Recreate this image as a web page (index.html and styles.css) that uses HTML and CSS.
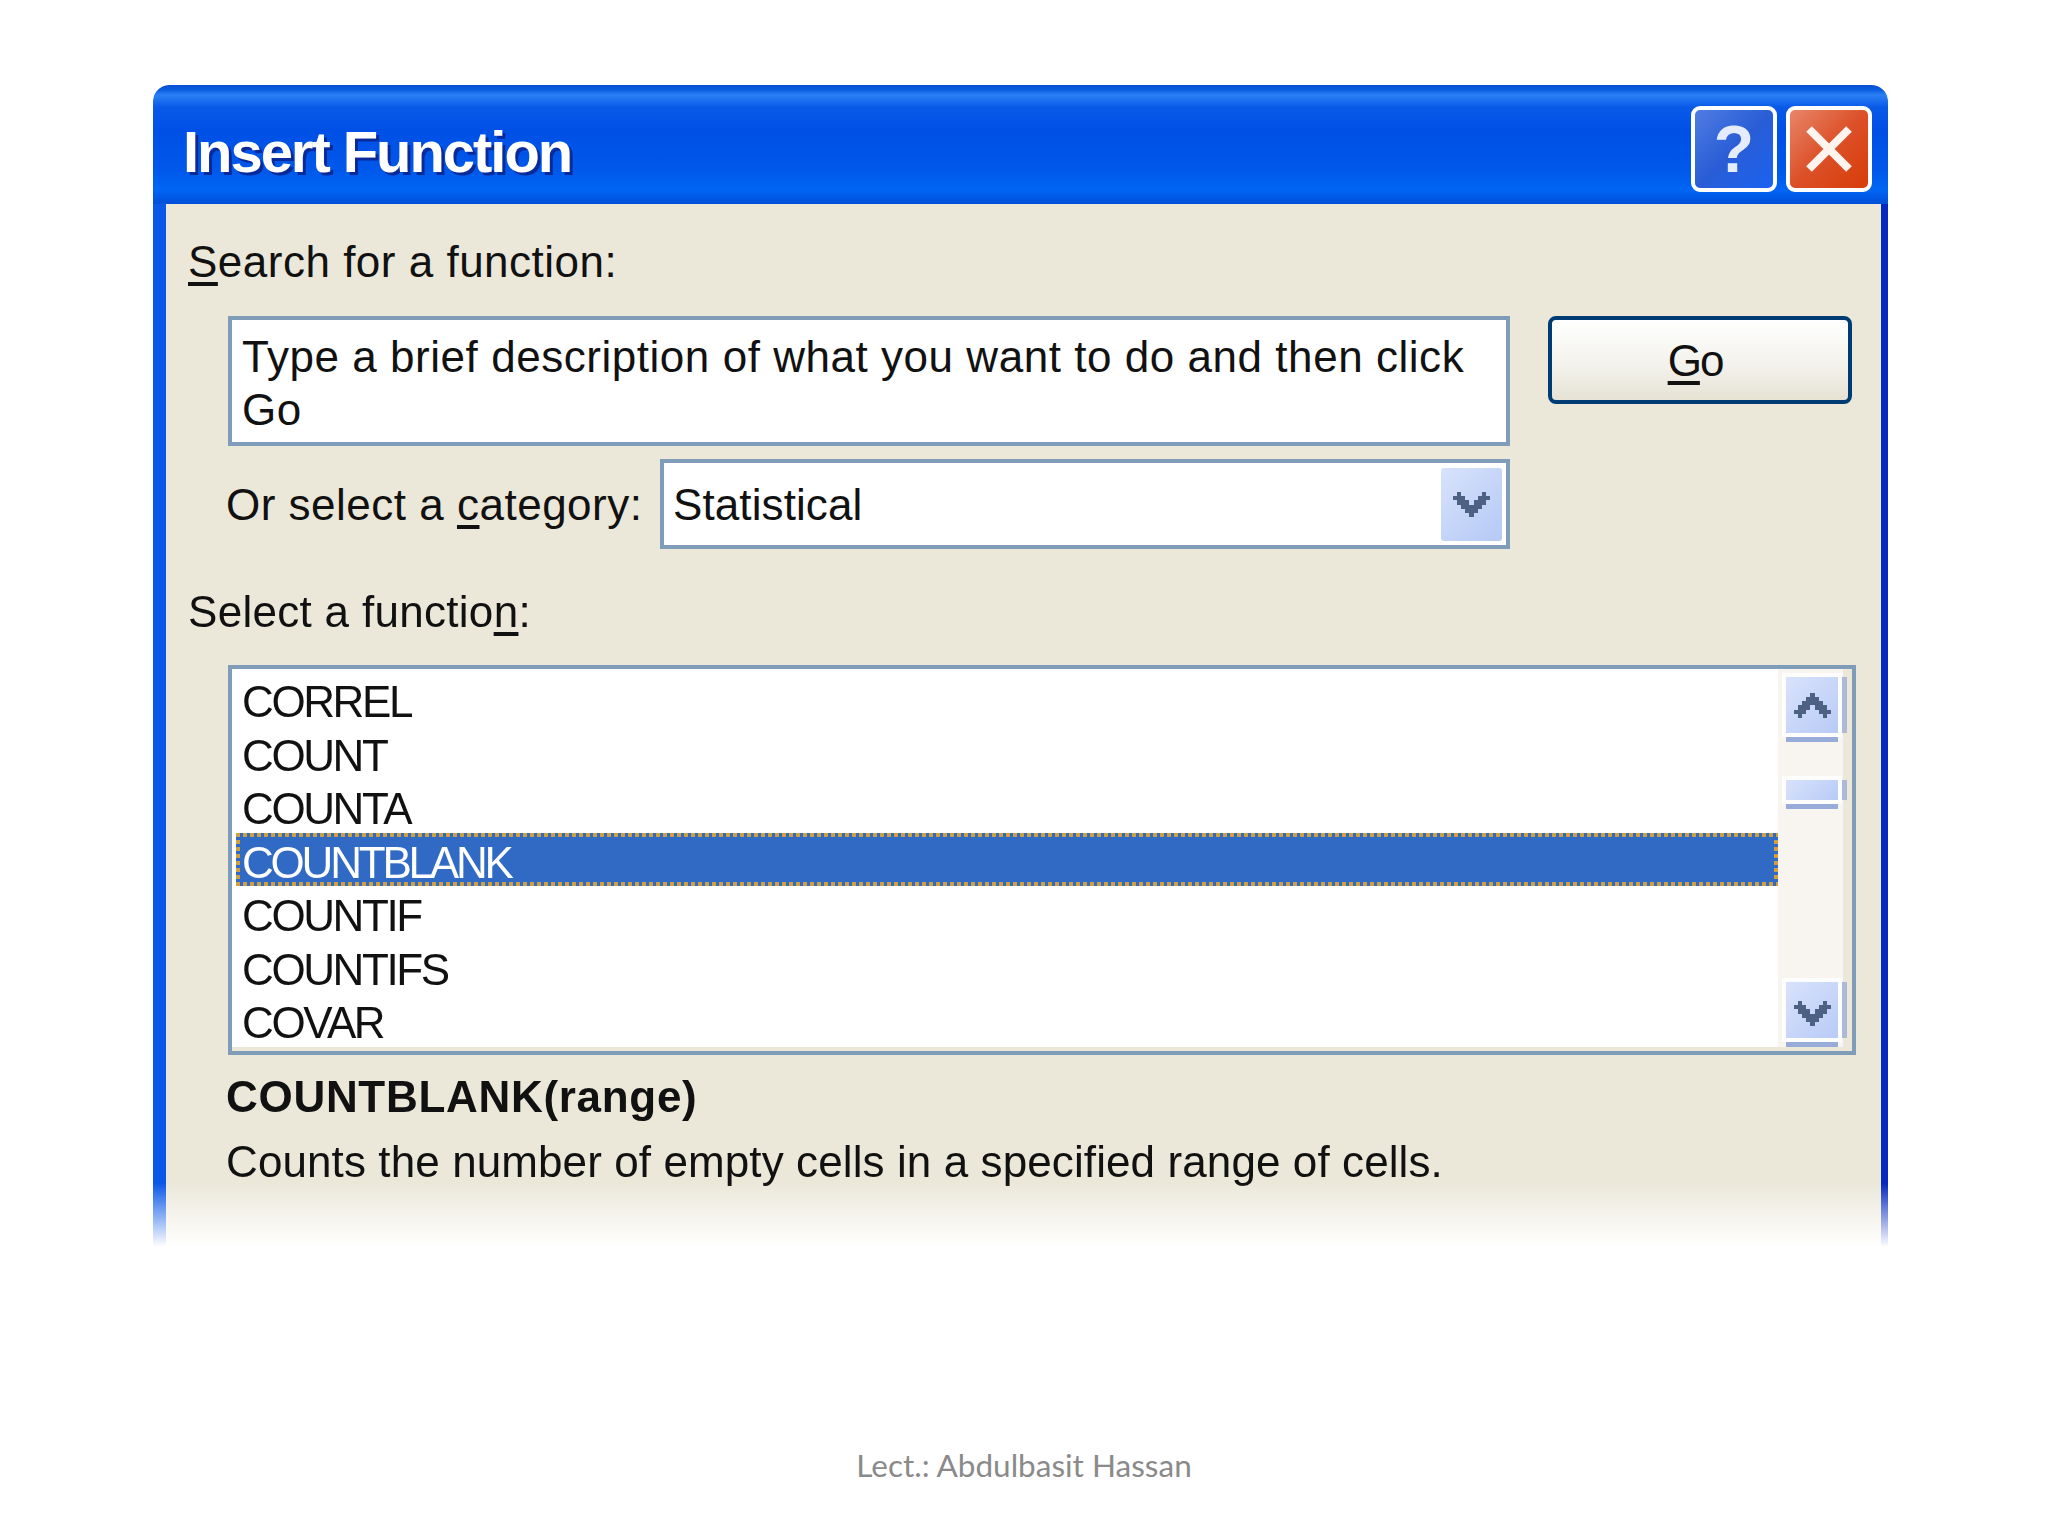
FILE: index.html
```html
<!DOCTYPE html>
<html lang="en">

<head>
    <meta charset="UTF-8">
    <meta name="viewport" content="width=device-width, initial-scale=1.0">
    <title>Insert Function</title>
    <link rel="stylesheet" href="styles.css">
</head>

<body>

    <svg class="defs" width="0" height="0">
        <symbol id="chevron" viewBox="0 0 9 6">
            <path d="M1 0H2V1H3V2H4V3H5V2H6V1H7V0H8V1H9V2H8V3H7V4H6V5H5V6H4V5H3V4H2V3H1V2H0V1H1Z"></path>
        </symbol>
    </svg>

    <div class="window">
        <div class="titlebar">
            <h1>Insert Function</h1>
            <div class="title-buttons">
                <div class="title-btn help-btn">?</div>
                <div class="title-btn close-btn">
                    <svg width="46" height="46" viewBox="0 0 46 46">
                        <path d="M3 3L43 43M43 3L3 43"></path>
                    </svg>
                </div>
            </div>
        </div>

        <div class="client">
            <p class="label"><u>S</u>earch for a function:</p>

            <div class="search-grid">
                <div class="search-input">Type a brief description of what you want to do and then click Go</div>
                <button class="go-btn"><u>G</u>o</button>
                <div class="category-row">
                    <span class="category-label">Or select a <u>c</u>ategory:</span>
                    <div class="combo">
                        <span>Statistical</span>
                        <div class="combo-btn">
                            <svg class="chevron"><use href="#chevron"></use></svg>
                        </div>
                    </div>
                </div>
            </div>

            <p class="label select-label">Select a functio<u>n</u>:</p>

            <div class="func-list">
                <ul>
                    <li>CORREL</li>
                    <li>COUNT</li>
                    <li>COUNTA</li>
                    <li class="selected">COUNTBLANK</li>
                    <li>COUNTIF</li>
                    <li>COUNTIFS</li>
                    <li>COVAR</li>
                </ul>
                <div class="scrollbar">
                    <div class="scroll-btn">
                        <svg class="chevron chevron-up"><use href="#chevron"></use></svg>
                    </div>
                    <div class="scroll-thumb"></div>
                    <div class="scroll-btn scroll-down">
                        <svg class="chevron"><use href="#chevron"></use></svg>
                    </div>
                </div>
            </div>

            <div class="func-info">
                <p class="func-sig">COUNTBLANK(range)</p>
                <p class="func-desc">Counts the number of empty cells in a specified range of cells.</p>
            </div>
        </div>
    </div>

    <p class="footer">Lect.: Abdulbasit Hassan</p>

</body>

</html>
```

FILE: styles.css
```css
body {
    font-family: 'Liberation Sans', Arial, sans-serif;
    font-size: 44px;
    line-height: 53px;
    letter-spacing: 0.1px;
    color: #111;
    background-color: white;
    margin: 0;
    height: 1536px;
    overflow: hidden;
}

.defs {
    display: block;
}

p {
    margin: 0;
}

u {
    text-underline-offset: 5px;
    text-decoration-thickness: 4px;
}

.window {
    width: 1735px;
    height: 1162px;
    margin: 85px 0 0 153px;
    border-radius: 16px 16px 0 0;
    overflow: hidden;
    display: flex;
    flex-direction: column;
    -webkit-mask-image: linear-gradient(to bottom, black 1098px, transparent 1162px);
    mask-image: linear-gradient(to bottom, black 1098px, transparent 1162px);
}

.titlebar {
    height: 119px;
    flex-shrink: 0;
    display: flex;
    justify-content: space-between;
    padding: 0 16px 0 30px;
    background: linear-gradient(to bottom,
            #0a4ed0 0,
            #0a5ee0 5px,
            #2c80f5 10px,
            #0a5ae8 22px,
            #0050e6 45px,
            #0058ea 85px,
            #0066f5 105px,
            #0050d8 118px);
}

h1 {
    margin: 0;
    padding-top: 32px;
    color: white;
    font-size: 58px;
    line-height: 70px;
    font-weight: bold;
    letter-spacing: -2.05px;
    text-shadow: 3px 3px 0 #0a2a9a;
}

.title-buttons {
    display: flex;
    gap: 9px;
    padding-top: 21px;
}

.title-btn {
    width: 86px;
    height: 86px;
    box-sizing: border-box;
    border: 4px solid white;
    border-radius: 9px;
    display: flex;
    justify-content: center;
    align-items: center;
}

.help-btn {
    color: #e6ecff;
    font-size: 66px;
    font-weight: bold;
    background: linear-gradient(135deg, #4f7de2, #2a5dd6 50%, #1a62f0);
}

.close-btn {
    background: linear-gradient(135deg, #e8866a, #dc5028 50%, #d83c08);
}

.close-btn path {
    stroke: #fff4ee;
    stroke-width: 8;
    fill: none;
}

.client {
    flex: 1;
    background-color: #ebe8da;
    border-left: 13px solid #0a58e8;
    border-right: 7px solid #0428c0;
    padding: 31px 25px 0 22px;
}

.label {
    letter-spacing: 0.5px;
}

.search-grid {
    display: grid;
    grid-template-columns: 1282px 304px;
    column-gap: 38px;
    row-gap: 13px;
    align-items: start;
    margin: 28px 0 0 40px;
}

.search-input {
    height: 130px;
    box-sizing: border-box;
    border: 4px solid #7f9db9;
    background-color: white;
    padding: 10px 10px 0;
    letter-spacing: 0.54px;
}

.go-btn {
    height: 88px;
    box-sizing: border-box;
    border: 4px solid #003c74;
    border-radius: 8px;
    background: linear-gradient(to bottom, #ffffff, #f2f1ea 60%, #e6e2d4);
    font: inherit;
    letter-spacing: -2px;
    color: inherit;
    padding: 0 10px 0 0;
}

.category-row {
    grid-column: 1;
    display: flex;
    justify-content: space-between;
    align-items: center;
    margin-left: -2px;
}

.category-label {
    letter-spacing: 0.5px;
}

.combo {
    width: 850px;
    height: 90px;
    box-sizing: border-box;
    border: 4px solid #7f9db9;
    background-color: white;
    display: flex;
    justify-content: space-between;
    align-items: center;
    padding: 0 4px 0 9px;
}

.combo-btn {
    width: 61px;
    height: 73px;
    border-radius: 3px;
    background: linear-gradient(135deg, #d8e2fb, #b4c9f5);
    display: flex;
    justify-content: center;
    align-items: center;
}

.chevron {
    width: 37px;
    height: 25px;
    fill: #4d6185;
    shape-rendering: crispEdges;
}

.chevron-up {
    transform: scaleY(-1);
}

.select-label {
    margin-top: 36px;
    letter-spacing: 0.3px;
}

.func-list {
    display: flex;
    width: 1628px;
    height: 390px;
    box-sizing: border-box;
    margin: 27px 0 0 40px;
    border: 4px solid #7f9db9;
    background-color: white;
    box-shadow: inset -9px -4px 0 #ebe8da;
}

ul {
    list-style: none;
    margin: 0;
    padding: 3px 0 0 4px;
    flex: 1;
}

li {
    height: 53.5px;
    line-height: 59px;
    padding-left: 6px;
    box-sizing: border-box;
    letter-spacing: -2.4px;
}

.selected {
    color: white;
    letter-spacing: -3.2px;
    background:
        repeating-linear-gradient(90deg, #d0a040 0 4px, #316ac5 4px 7px) top / 100% 4px no-repeat,
        repeating-linear-gradient(90deg, #d0a040 0 4px, #316ac5 4px 7px) bottom / 100% 4px no-repeat,
        repeating-linear-gradient(0deg, #d0a040 0 4px, #316ac5 4px 7px) left / 4px 100% no-repeat,
        repeating-linear-gradient(0deg, #d0a040 0 4px, #316ac5 4px 7px) right / 4px 100% no-repeat,
        #316ac5;
}

.scrollbar {
    width: 65px;
    margin-right: 9px;
    margin-bottom: 4px;
    box-sizing: border-box;
    padding: 8px 5px 9px 8px;
    background-color: #f8f5f0;
    display: flex;
    flex-direction: column;
}

.scroll-btn,
.scroll-thumb {
    background: linear-gradient(135deg, #d8e2fb, #b8cbf6);
    box-shadow: 0 0 0 4px #fdfdfd, 0 9px 0 0 #97acd8, 9px 0 0 0 #aeb9d6;
}

.scroll-btn {
    height: 56px;
    flex-shrink: 0;
    display: flex;
    justify-content: center;
    align-items: center;
}

.scroll-thumb {
    height: 20px;
    margin-top: 47px;
}

.scroll-down {
    margin-top: auto;
    box-sizing: border-box;
    padding-top: 6px;
}

.func-info {
    margin: 15px 0 0 38px;
}

.func-sig {
    font-weight: bold;
    letter-spacing: 0.7px;
    margin-bottom: 12px;
}

.footer {
    margin-top: 198px;
    text-align: center;
    font-family: Lato, sans-serif;
    font-size: 31.5px;
    line-height: 40px;
    letter-spacing: 0;
    color: #8a8a8a;
}
```
